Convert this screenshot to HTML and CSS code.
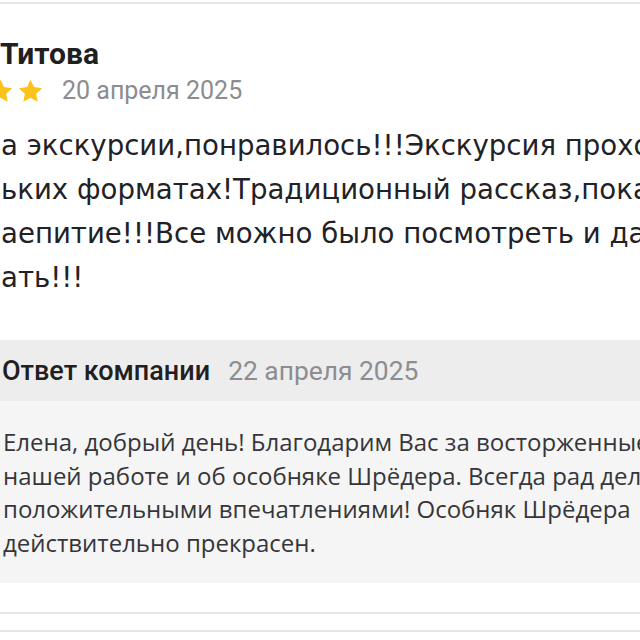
FILE: index.html
```html
<!DOCTYPE html>
<html lang="ru">
<head>
<meta charset="utf-8">
<title>Отзыв</title>
<link rel="stylesheet" href="styles.css">
</head>
<body>
<div class="page">
  <div class="divider top"></div>
  <article class="review">
    <div class="author">Титова</div>
    <div class="meta">
      <div class="stars">
        <svg class="star" viewBox="0 0 24 24"><path d="M12 1.5l3.1 6.6 7.2.9-5.3 5 1.4 7.1L12 17.6l-6.4 3.5 1.4-7.1-5.3-5 7.2-.9z"/></svg>
        <svg class="star" viewBox="0 0 24 24"><path d="M12 1.5l3.1 6.6 7.2.9-5.3 5 1.4 7.1L12 17.6l-6.4 3.5 1.4-7.1-5.3-5 7.2-.9z"/></svg>
      </div>
      <span class="date">20 апреля 2025</span>
    </div>
    <div class="text">
      <div class="line">а экскурсии,понравилось!!!Экскурсия проходила в</div>
      <div class="line">ьких форматах!Традиционный рассказ,показ</div>
      <div class="line">аепитие!!!Все можно было посмотреть и даже</div>
      <div class="line">ать!!!</div>
    </div>
    <div class="reply">
      <div class="reply-head">
        <span class="reply-title">Ответ компании</span>
        <span class="reply-date">22 апреля 2025</span>
      </div>
      <div class="reply-body">
        <div class="line">Елена, добрый день! Благодарим Вас за восторженные отзывы о</div>
        <div class="line">нашей работе и об особняке Шрёдера. Всегда рад делиться</div>
        <div class="line">положительными впечатлениями! Особняк Шрёдера</div>
        <div class="line">действительно прекрасен.</div>
      </div>
    </div>
  </article>
  <div class="divider first"></div>
  <div class="divider second"></div>
</div>
</body>
</html>
```
FILE: styles.css
```css
html, body {
  margin: 0;
  padding: 0;
  background: #ffffff;
}
body {
  width: 640px;
  height: 640px;
  overflow: hidden;
  font-family: Roboto, "Liberation Sans", sans-serif;
  color: #21201f;
}
.page {
  width: 640px;
  overflow: hidden;
}
.divider {
  height: 2px;
  background: #e5e5e8;
}
.divider.top {
  margin-top: 2px;
}
.review {
  padding-top: 32px;
}
.author {
  font-size: 30px;
  font-weight: 700;
  line-height: 36px;
  white-space: nowrap;
}
.meta {
  display: flex;
  align-items: center;
  gap: 18px;
  margin-top: 4px;
  height: 30px;
}
.stars {
  display: flex;
  gap: 3px;
  margin-left: -13px;
}
.star {
  width: 27px;
  height: 27px;
  fill: #fbc21a;
}
.date {
  font-size: 25px;
  line-height: 30px;
  color: #8c8c91;
  white-space: nowrap;
}
.text {
  margin-top: 18px;
  font-family: "DejaVu Sans", "Open Sans", sans-serif;
  font-size: 27.6px;
  line-height: 44px;
  padding-left: 1px;
  color: #222226;
}
.line {
  white-space: nowrap;
}
.reply {
  margin-top: 40px;
}
.reply-head {
  display: flex;
  align-items: center;
  gap: 18px;
  height: 61px;
  background: #ededed;
  padding-left: 2px;
}
.reply-title {
  font-size: 27px;
  font-weight: 500;
  white-space: nowrap;
}
.reply-date {
  font-size: 26.4px;
  color: #8c8c91;
  white-space: nowrap;
}
.reply-body {
  background: #f5f5f5;
  padding: 24px 0 24px 3px;
  font-family: "Open Sans", "Noto Sans", sans-serif;
  font-size: 24px;
  line-height: 33.5px;
  color: #36363a;
}
.divider.first {
  margin-top: 29px;
}
.divider.second {
  margin-top: 16px;
}
```
